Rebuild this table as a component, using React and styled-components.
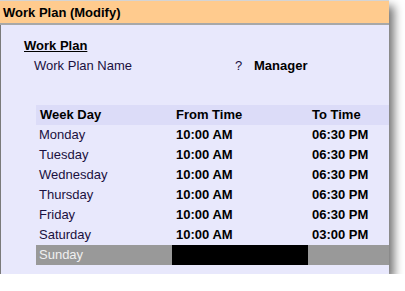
import React from 'react'
import styled, { createGlobalStyle } from 'styled-components'

const days = [
    { day: 'Monday', from: '10:00 AM', to: '06:30 PM' },
    { day: 'Tuesday', from: '10:00 AM', to: '06:30 PM' },
    { day: 'Wednesday', from: '10:00 AM', to: '06:30 PM' },
    { day: 'Thursday', from: '10:00 AM', to: '06:30 PM' },
    { day: 'Friday', from: '10:00 AM', to: '06:30 PM' },
    { day: 'Saturday', from: '10:00 AM', to: '03:00 PM' },
]

const App = () => {
    return (
        <>
            <GlobalStyle />
            <Window>
                <TitleBar>Work Plan (Modify)</TitleBar>
                <Panel>
                    <SectionTitle>Work Plan</SectionTitle>
                    <FieldRow>
                        <FieldLabel>Work Plan Name</FieldLabel>
                        <FieldHint>?</FieldHint>
                        <FieldValue>Manager</FieldValue>
                    </FieldRow>
                    <Table>
                        <HeadRow>
                            <Cell>Week Day</Cell>
                            <Cell>From Time</Cell>
                            <Cell>To Time</Cell>
                        </HeadRow>
                        {days.map((d) => (
                            <Row key={d.day}>
                                <DayCell>{d.day}</DayCell>
                                <Cell>{d.from}</Cell>
                                <Cell>{d.to}</Cell>
                            </Row>
                        ))}
                        <OffRow>
                            <DayCell off>Sunday</DayCell>
                            <BlankCell />
                            <Cell />
                        </OffRow>
                    </Table>
                </Panel>
            </Window>
        </>
    )
}

export default App

const GlobalStyle = createGlobalStyle`
    body {
        margin: 0;
        background: #ffffff;
        font-family: 'Liberation Sans', Arial, sans-serif;
    }
`

const Window = styled.div`
    width: 389px;
    border-top: 1px solid #d4d4d4;
    box-shadow: 5px 6px 9px rgba(0, 0, 0, 0.55);
    overflow: hidden;
`

const TitleBar = styled.div`
    background-color: #ffcb8e;
    height: 22px;
    padding: 2px 0 0 3px;
    box-sizing: border-box;
    line-height: 20px;
    font-size: 13px;
    font-weight: bold;
    color: #000000;
    border-bottom: 2px solid #a8a8a8;
    height: 24px;
`

const Panel = styled.div`
    background-color: #e8e8fc;
    border-left: 1px solid #7a7a7a;
    padding: 11px 0 9px 23px;
    font-size: 13px;
    line-height: 20px;
`

const SectionTitle = styled.div`
    font-weight: bold;
    text-decoration: underline;
    color: #000000;
`

const FieldRow = styled.div`
    display: flex;
    padding-left: 10px;
    color: #1a1040;
    margin-bottom: 29px;
`

const FieldLabel = styled.span`
    width: 201px;
`

const FieldHint = styled.span`
    width: 19px;
`

const FieldValue = styled.span`
    font-weight: bold;
    color: #000000;
`

const Table = styled.div`
    margin-left: 12px;
    display: grid;
    grid-template-columns: 136px 136px 81px;
`

const Row = styled.div`
    display: contents;
`

const Cell = styled.div`
    height: 20px;
    padding-left: 4px;
    font-weight: bold;
    color: #000000;
    white-space: nowrap;
`

const HeadRow = styled(Row)`
    & > div {
        background-color: #dcdcf8;
    }
`

const DayCell = styled(Cell)`
    padding-left: 3px;
    font-weight: normal;
    color: ${(p) => (p.off ? '#f0f0f0' : '#1a1040')};
`

const OffRow = styled(Row)`
    & > div {
        background-color: #999999;
    }
`

const BlankCell = styled(Cell)`
    && {
        background-color: #000000;
    }
`
